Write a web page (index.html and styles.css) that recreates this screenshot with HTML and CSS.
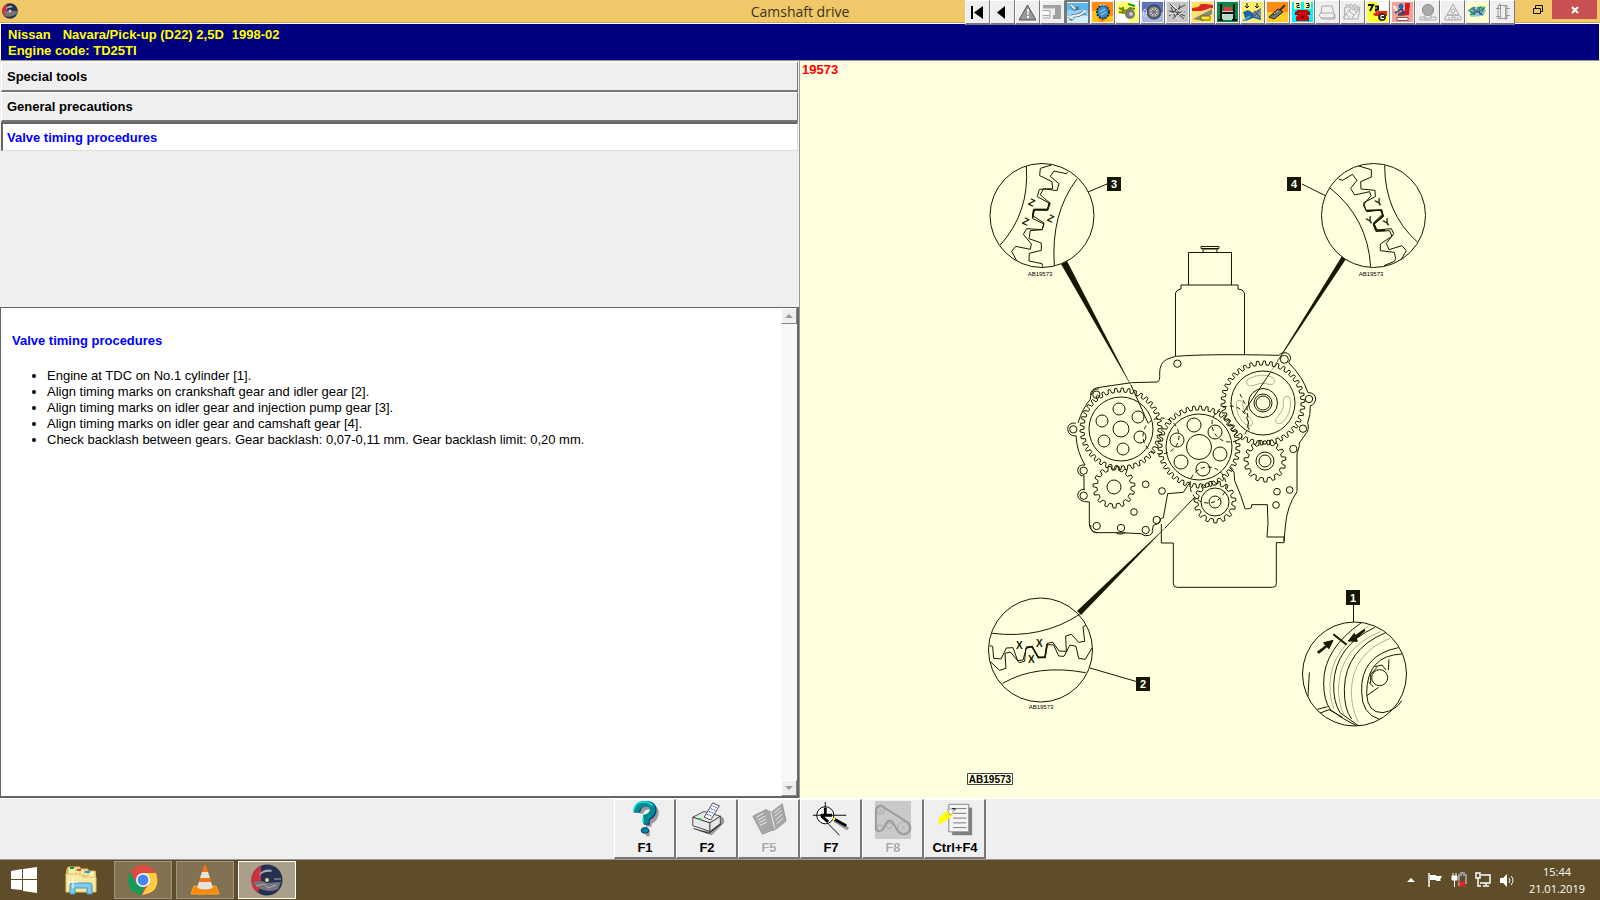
FILE: index.html
```html
<!DOCTYPE html>
<html lang="en">
<head>
    <meta charset="UTF-8">
    <meta name="viewport" content="width=device-width, initial-scale=1.0">
    <title>Camshaft drive</title>
    <link rel="stylesheet" href="styles.css">
</head>
<body>
    <header class="titlebar">
        <svg class="app-icon" viewBox="0 0 32 32">
            <circle cx="16" cy="16" r="15.500" fill="#26304f"/>
            <path d="M10 2A15.500 15.500 0 0 0 7 29L11 18Z" fill="#d0303c"/>
            <path d="M2 18Q10 14 30 16L29 22Q20 29 9 27Z" fill="#77737c"/>
            <path d="M9 9Q14 4 21 6L20 9Q13 8 8 12Z" fill="#b4bac4"/>
            <circle cx="16" cy="16" r="3" fill="#d8cfae"/>
        </svg>
        <h1>Camshaft drive</h1>
        <div class="title-right">
            <nav class="tools">
                <button aria-label="First"><svg viewBox="0 0 21 20"><path d="M4 4h2v13H4zM16 4v13L7 10.500z"/></svg></button>
                <button aria-label="Back"><svg viewBox="0 0 21 20"><path d="M13 4v13L5 10.500z"/></svg></button>
                <button aria-label="Warnings"><svg viewBox="0 0 21 20"><path d="M10.500 3L19 18H2z" fill="#999" stroke="#555"/><path d="M10 7h2l-.5 6h-1zM10 14h2v2h-2z" fill="#fff"/></svg></button>
                <button aria-label="Data"><svg viewBox="0 0 21 20"><path d="M1 3h18v14h-8V13h2V6H1z" fill="#a0a0a0"/><path d="M1 5h11v1H1M1 8.500h7v5H1M8 14v2H1" fill="none" stroke="#aaa"/><path d="M1 10h6v2H1z" fill="#fff"/></svg></button>
                <button class="active" aria-label="Procedures"><svg viewBox="0 0 21 20"><path fill="#5bb8ee" d="M0 0h21v7H0z"/><path fill="#8fd2f5" d="M0 7h21v6H0z"/><path fill="#d3effb" d="M0 13h21v7H0z"/><path d="M4 2l4 5M7 6l5-1M2 16l4-3 6-1 5-3M16 9l3 1M3 14l3 3" stroke="#5e7685" stroke-width="3.500" fill="none"/><path d="M4 2l4 4M2 15l4-2 6-1 5-3M16 8l3 1M3 13l3 3" stroke="#e3edf0" stroke-width="2" fill="none"/></svg></button>
                <button aria-label="Timing belt"><svg viewBox="0 0 21 20"><path fill="#ff8a0c" d="M0 0h21v20H0z"/><path fill="#ffc31d" d="M0 9h6l2 11H0zM14 14h7v6h-9z"/><ellipse cx="11" cy="10" rx="6" ry="6.500" fill="#3d8dc7" stroke="#15364d" stroke-width="2" stroke-dasharray="2 1"/><path d="M8 10l5-3M9 13l5-3M7 3h7" stroke="#a9e2f3"/></svg></button>
                <button aria-label="Auxiliary drive"><svg viewBox="0 0 21 20"><path fill="#ffff6b" d="M0 0h21v20H0z"/><path fill="#fff" d="M0 12h7l6 8H0zM13 0h8v6z"/><path d="M2 6l7 3 4-3 5 1M2 10l6 1M6 5v7" stroke="#728900" stroke-width="2" fill="none"/><circle cx="13" cy="12" r="5" fill="#777"/><circle cx="14" cy="12" r="2" fill="#ccc"/><path d="M11 2l7 2" stroke="#159b26" stroke-width="2"/></svg></button>
                <button aria-label="Tyres"><svg viewBox="0 0 21 20"><path fill="#5c74ba" d="M0 0h21v10H0z"/><path fill="#a9b8de" d="M0 10h21v10H0z"/><circle cx="12" cy="10" r="6.500" fill="#888" stroke="#444a5e" stroke-width="2"/><circle cx="12" cy="10" r="4" fill="#c7c7cc"/><path d="M12 6v8M8 10h8M9 7l6 6M15 7l-6 6" stroke="#666"/><ellipse cx="3" cy="11" rx="1.500" ry="4" fill="none" stroke="#d4d4da"/></svg></button>
                <button aria-label="Engine management"><svg viewBox="0 0 21 20"><path fill="#c5c5c5" d="M0 0h21v20H0z"/><path d="M3 2l6 6 9-5M2 9l7 1 8 7M6 17l5-6 7-2M13 3l-3 10M2 14l8-7M4 5l4 10M13 12l5 2" stroke="#444" fill="none"/><path d="M5 2l7 7M12 13l6-5M3 12l5-1M9 15l4 3" stroke="#eee"/></svg></button>
                <button aria-label="Air conditioning"><svg viewBox="0 0 21 20"><path fill="#ffe45a" d="M0 0h21v20H0z"/><path d="M0 6l6-1 3-3h5l7 1v3L9 9H0z" fill="#dd2724"/><path d="M1 17L20 7v5l-9 7z" fill="#8a8a72"/><path d="M1 15L19 6" stroke="#ddd"/><path fill="#ffe632" stroke="#776e19" d="M9 14h9v4H9z"/></svg></button>
                <button aria-label="Jacking points"><svg viewBox="0 0 21 20"><path fill="#0b854a" d="M0 0h21v20H0z"/><path fill="#b8dcc8" d="M5 9h11v9H5z"/><path d="M4 2v16M17 2v16M3 11h15" stroke="#111" stroke-width="2"/><path d="M7 5h7l1 4H6z" fill="#df4038"/><path d="M1 18h5M15 18h5" stroke="#111" stroke-width="2"/></svg></button>
                <button aria-label="Wheel alignment"><svg viewBox="0 0 21 20"><path fill="#fff06b" d="M0 0h21v20H0z"/><path d="M5 1v5M15 1v5M3 4l2 2 2-2M13 4l2 2 2-2" stroke="#111" fill="none"/><path d="M1 10l5-2 5 3 8-5v12l-8-2-7 3z" fill="#2363a5"/><path d="M11 10l8-3v9l-6-1z" fill="#8190a1"/><path d="M12 9l6 6M17 8l-4 6" stroke="#444"/><path d="M1 19l7-5" stroke="#49a5dc" stroke-width="2"/></svg></button>
                <button aria-label="Key programming"><svg viewBox="0 0 21 20"><path fill="#ff8c13" d="M0 0h21v10H0z"/><path fill="#ffcf24" d="M0 10h21v10H0z"/><path d="M2 15l9-8 5 3-9 7z" fill="#777" stroke="#222"/><path d="M13 8l5-5M6 13l4-3" stroke="#333" stroke-width="2"/><path d="M7 12l4-3" stroke="#ddd"/></svg></button>
                <button aria-label="Fault codes"><svg viewBox="0 0 21 20"><path fill="#00f3ff" d="M0 0h21v20H0z"/><path fill="#ffff9d" d="M2 0h7v7H2zM12 0h7v7h-7z"/><path d="M4 1.500h3v2H5v2h3M14 1.500h3v4h-3M15 3.500h2" stroke="#111" fill="none"/><path d="M4 19v-4l4-4h5l4 4v4z" fill="#db0000"/><path d="M3 13v-3l3-2h9l3 2v3h-4v-2H7v2z" fill="#b80000"/><circle cx="10.500" cy="15" r="1.500" fill="#400"/></svg></button>
                <button aria-label="Seats" disabled><svg viewBox="0 0 21 20" fill="none" stroke="#aaa"><path d="M5 4h10l2 8v4H4l-2-3 2-2zM4 11h12M4 16l2 1h12v-5"/></svg></button>
                <button aria-label="Service data" disabled><svg viewBox="0 0 21 20" fill="none" stroke="#aaa"><path d="M3 5h15l-2 12H2zM1 16L8 7h9l-7 9M4 12l4 4M7 9l5 4M11 7l4 3M4 4l1-2 2 2 2-2 2 2 2-2 2 2"/></svg></button>
                <button aria-label="Diagnosis"><svg viewBox="0 0 21 20"><path fill="#ffff38" d="M0 0h21v20H0z"/><path fill="#fff" d="M11 0h10v9L8 8z"/><path d="M1 3h5l-3 6M8 4.500h3v3H9v2" stroke="#111" fill="none" stroke-width="2"/><path d="M6 12l5-3h9v5H8z" fill="#ee2725"/><circle cx="15" cy="15" r="4" fill="#333"/><path d="M17 13.500h-3v3h3" fill="none" stroke="#fff"/></svg></button>
                <button aria-label="Airbags"><svg viewBox="0 0 21 20"><path fill="#f2a199" d="M0 0h21v20H0z"/><path d="M13 1h5l-1 12-8 1-3-3 7-2z" fill="#cf1c20"/><circle cx="9" cy="4" r="2.500" fill="#2c65a8"/><path d="M9 6l3 5-6 2M3 11l6-4" stroke="#234e7d" stroke-width="2" fill="none"/><path d="M2 4l3 5" stroke="#fff" stroke-width="2"/><path d="M5 15.500h11v3H5z" fill="#fff" stroke="#8b5551"/></svg></button>
                <button aria-label="A/C refrigerant" disabled><svg viewBox="0 0 21 20"><circle cx="11" cy="8" r="5.500" fill="#aaa" stroke="#888"/><path d="M3 15h5v-2h6v2h5v3H3zM6 16h9M8 16l2 2" fill="none" stroke="#aaa"/></svg></button>
                <button aria-label="ABS" disabled><svg viewBox="0 0 21 20" fill="none" stroke="#aaa"><path d="M11 2l6 11H5zM3 15l3-2h10l3 2v3H3zM7 15v3M10 18v-3h3v3M15 15l1 3"/><circle cx="11" cy="9" r="2"/></svg></button>
                <button aria-label="Wiring diagrams"><svg viewBox="0 0 21 20"><path fill="#ffffce" d="M0 0h21v20H0z"/><path d="M2 8l4-3 11-1 2 5-3 5-12 1z" fill="#8fcbd6"/><path d="M1 9l6-4v8l5-8 1 8 5-8M3 13l14-6M4 6l12 7" stroke="#29616f" fill="none"/><path d="M3 9l3 2M13 5l3 2" stroke="#299b37" stroke-width="2"/></svg></button>
                <button aria-label="Component location" disabled><svg viewBox="0 0 21 20" fill="none" stroke="#999"><path d="M6 3.500h9v13H6zM8.500 3v14M13.500 3v14M4 6.500h4M4 14.500h4M14 6.500h4M14 13.500h4M8 1v3M14 15v3"/></svg></button>
            </nav>
            <button class="win-btn" aria-label="Restore"><svg viewBox="0 0 12 12"><path d="M1.500 4.500h7v5h-7zM3.500 4V1.500h7v6H9" fill="none" stroke="#111"/></svg></button>
            <button class="win-btn close" aria-label="Close"><svg viewBox="0 0 12 12"><path d="M3 3l6 6M9 3l-6 6" stroke="#fff" stroke-width="2"/></svg></button>
        </div>
    </header>

    <section class="vehicle">
        <p><span class="make">Nissan</span><span class="model">Navara/Pick-up (D22) 2,5D</span><span>1998-02</span></p>
        <p>Engine code: TD25TI</p>
    </section>

    <main>
        <section class="left">
            <nav class="tabs">
                <button>Special tools</button>
                <button>General precautions</button>
                <button class="selected">Valve timing procedures</button>
            </nav>
            <div class="document">
                <article>
                    <h2>Valve timing procedures</h2>
                    <ul>
                        <li>Engine at TDC on No.1 cylinder [1].</li>
                        <li>Align timing marks on crankshaft gear and idler gear [2].</li>
                        <li>Align timing marks on idler gear and injection pump gear [3].</li>
                        <li>Align timing marks on idler gear and camshaft gear [4].</li>
                        <li>Check backlash between gears. Gear backlash: 0,07-0,11 mm. Gear backlash limit: 0,20 mm.</li>
                    </ul>
                </article>
                <div class="scrollbar">
                    <button aria-label="Scroll up"><svg viewBox="0 0 8 4"><path d="M4 0l4 4H0z"/></svg></button>
                    <button aria-label="Scroll down"><svg viewBox="0 0 8 4"><path d="M0 0h8L4 4z"/></svg></button>
                </div>
            </div>
        </section>

        <section class="figure">
            <p class="figure-id">19573</p>
            <svg class="diagram" viewBox="800 61 800 737">
                <!-- engine block and housing -->
                <g transform="translate(1060 340) scale(.33333)" class="ink block">
                    <path d="M347 49L320 58Q299 70 299 99Q301 125 291 126L215 128L112 143Q91 148 92 166L91 178Q68 204 54 249M48 288Q51 336 75 375M72 408V448M88 486V555Q92 574 109 578L180 578L243 581Q254 591 268 586Q281 580 277 571L280 556Q304 550 301 536L310 533L323 461L370 457L387 431M304 552V609H340V731Q340 742 352 742H638Q649 742 649 731V608H672V591H621L624 550L622 494H575V501Q573 508 555 506L542 466L524 422L522 396L508 382"/>
                    <path d="M347 49Q450 41 657 46Q661 38 675 38Q691 40 692 56L686 68Q728 110 744 158Q767 158 767 178Q763 196 751 197Q752 224 743 249Q750 268 735 285L718 309V317L711 342V455Q680 500 676 560L672 604"/>
                    <path d="M94 165Q98 145 117 147M47 249Q23 248 23 268Q25 288 49 288M75 375Q53 373 53 392Q56 408 73 408M75 448Q53 448 53 467Q56 486 88 486M92 555Q91 579 112 578M168 577Q171 584 186 582L197 577"/>
                    <circle cx="352" cy="71" r="11"/><circle cx="673" cy="58" r="12"/><circle cx="747" cy="177" r="11"/><circle cx="729" cy="266" r="11"/><circle cx="700" cy="327" r="11"/>
                    <circle cx="109" cy="164" r="11"/><circle cx="40" cy="268" r="11"/><circle cx="71" cy="392" r="11"/><circle cx="71" cy="467" r="11"/><circle cx="110" cy="558" r="11"/><circle cx="183" cy="564" r="11"/><circle cx="257" cy="570" r="11"/><circle cx="290" cy="540" r="11"/><circle cx="222" cy="516" r="10"/><circle cx="257" cy="433" r="10"/><circle cx="306" cy="453" r="10"/><circle cx="651" cy="455" r="10"/><circle cx="689" cy="450" r="10"/><circle cx="648" cy="495" r="10"/>
                </g>
                <g class="ink">
                    <path d="M1175.500 356V293Q1177 289 1181 289V285H1238V289Q1243 289 1244.500 293V355M1188.500 285V252.500H1231.500V285M1203 252V249H1217V252M1201 246.500h18v2h-18z"/>
                </g>

                <!-- gears, outlines are filled in by gears.js -->
                <g class="ink gears">
                    <path class="gear" data-cx="1121" data-cy="429" data-r="41" data-teeth="38"/>
                    <path class="gear" data-cx="1199" data-cy="447" data-r="41" data-teeth="38"/>
                    <path class="gear" data-cx="1263" data-cy="403" data-r="42" data-teeth="38"/>
                    <path class="gear" data-cx="1114" data-cy="487" data-r="21" data-teeth="15"/>
                    <path class="gear" data-cx="1215" data-cy="502" data-r="21" data-teeth="15"/>
                    <path class="gear" data-cx="1265" data-cy="461" data-r="21" data-teeth="15"/>
                    <circle cx="1121" cy="429" r="32"/><circle cx="1121" cy="429" r="8"/>
                    <circle cx="1119" cy="409" r="6"/><circle cx="1138" cy="417" r="6"/><circle cx="1140" cy="437" r="6"/><circle cx="1123" cy="449" r="6"/><circle cx="1104" cy="441" r="6"/><circle cx="1102" cy="421" r="6"/>
                    <circle cx="1199" cy="447" r="33"/><circle cx="1199" cy="447" r="12.500"/>
                    <circle cx="1194" cy="425" r="7"/><circle cx="1215" cy="432" r="7"/><circle cx="1220" cy="454" r="7"/><circle cx="1203" cy="469" r="7"/><circle cx="1181" cy="462" r="7"/><circle cx="1177" cy="440" r="7"/>
                    <circle cx="1263" cy="403" r="32"/><circle cx="1263" cy="403" r="14.500"/><circle cx="1263" cy="403" r="9"/><circle cx="1263" cy="403" r="7"/>
                    <circle cx="1114" cy="487" r="7"/><circle cx="1215" cy="502" r="14"/><circle cx="1215" cy="502" r="6"/><circle cx="1265" cy="461" r="9"/><circle cx="1265" cy="461" r="6"/>
                </g>
                <g transform="translate(1060 340) scale(.33333)" class="slots">
                    <path d="M566 116Q607 96 639 113Q649 120 641 130Q635 138 620 131Q601 127 578 137Q563 140 560 128Q558 120 566 116ZM676 170Q690 166 691 182Q696 214 670 246Q656 256 648 247Q642 239 654 229Q674 207 670 185Q668 174 676 170ZM533 182Q547 179 548 191Q548 214 574 239Q583 248 574 257Q565 261 555 252Q529 229 529 194Q528 185 533 182Z"/>
                </g>
                <g class="ink dashed">
                    <circle cx="1161" cy="436" r="18"/><circle cx="1230" cy="424" r="18"/><circle cx="1208" cy="485" r="18"/>
                    <path d="M1240 394l7 14 2 22"/>
                </g>

                <!-- pointers -->
                <g class="solid">
                    <path d="M1061 264l6-3 67 130z"/>
                    <path d="M1342 256l4 3-78 117z"/>
                    <path d="M1077 611l4 4 88-91z"/>
                </g>
                <path class="ink" d="M1131 385l17 38M1270 373l-27 40M1165 528l30-31"/>
                <path class="ink" d="M1088 192l19-8M1302 184l24 12M1090 668l48 14M1353.500 605v17"/>

                <!-- detail 3: idler and injection pump gears -->
                <circle class="lens" cx="1042" cy="215.500" r="52"/>
                <g transform="translate(970 150) scale(.33333)" class="ink detail">
                    <path d="M169 49Q179 188 90 286M321 87Q242 190 253 347"/>
                    <path d="M245 45L211 55L209 77L246 95L248 116L208 118L202 140L238 160L232 181L190 180L187 205L222 222L216 239L170 236L160 253L184 282L181 298L137 289L125 304L140 332"/>
                    <path d="M294 67L289 71L252 63L241 79L267 101L261 122L220 116L211 135L241 160L233 178L194 178L188 197L222 219L217 239L181 242L177 266L214 279V301L178 310L177 333L216 341L218 350"/>
                    <path class="bold-line" d="M238 158L233 179L192 179L188 203"/>
                </g>

                <!-- detail 4: idler and camshaft gears -->
                <circle class="lens" cx="1373.500" cy="215.500" r="52"/>
                <g transform="translate(1270 150) scale(.33333)" class="ink detail">
                    <path d="M344 46Q344 188 442 276M180 114Q293 204 302 350"/>
                    <path d="M266 48L304 59V81L272 95L273 117L315 121L316 140L281 158L288 181L335 181L340 200L310 224L318 244L359 242L366 259L331 282V302L373 307L377 326L373 334L342 347"/>
                    <path d="M206 87L218 91L247 73L261 91L242 115L254 135L299 125L303 137L280 165L290 185L330 180L338 192L311 218L321 240L364 236L371 251L349 280L357 299L396 287L409 302L393 330"/>
                    <path class="bold-line" d="M290 182L334 180L339 197L311 222L319 242L345 241"/>
                </g>

                <!-- detail 2: crankshaft and idler gears -->
                <circle class="lens" cx="1040.500" cy="650" r="52"/>
                <g transform="translate(970 570) scale(.33333)" class="ink detail">
                    <path d="M67 190Q215 208 329 133M98 340Q200 281 347 308"/>
                    <path d="M60 227L68 229L71 265L93 267L109 234L129 233L143 272L159 270L170 232L187 229L204 263L225 262L231 221L248 216L267 243L289 244L287 198L304 193L326 217L344 214L339 170L347 166"/>
                    <path d="M61 275L89 301L108 295L105 250L121 246L148 278L164 274L167 235L186 230L206 262L225 262L232 224L251 225L266 258L282 259L300 225L318 229L326 265L346 268L366 234"/>
                    <path class="bold-line" d="M168 233L186 230L205 262L225 262L231 224"/>
                </g>

                <!-- detail 1: crankshaft pulley -->
                <circle class="lens" cx="1354.500" cy="674" r="52"/>
                <g transform="translate(1280 580) scale(.33333)" class="ink detail">
                    <path d="M243 129Q130 208 131 309Q131 362 152 390Q188 417 229 437M285 142Q165 198 161 314Q160 365 180 398L235 437M317 158Q197 208 193 326Q192 388 215 417M355 203Q240 226 245 337Q245 401 298 418M366 222Q260 226 260 341Q262 399 309 398Q350 390 365 362M88 277L84 349M112 388L143 380M121 399L147 389L188 412M327 238L325 270M260 347L296 322M285 260L306 255L318 270M266 307L280 320"/>
                    <path class="fine" d="M268 137Q154 205 150 312Q149 359 162 386M302 155Q180 202 175 326Q177 375 191 402M330 175Q215 220 214 337Q215 390 236 428"/>
                    <circle cx="299" cy="293" r="24"/><path d="M291 262L272 283V310"/>
                    <path class="mark" d="M160 163L200 194"/>
                    <path class="arrow" d="M112 216L137 197L131 188L159 181L147 206L141 200L117 220ZM253 148L227 167L223 160L205 183L232 184L229 175L255 152Z"/>
                </g>

                <g class="marks">
                    <text x="-3" y="4" transform="translate(1032 202) rotate(25)">Z</text><text x="-3" y="4" transform="translate(1026 221) rotate(25)">Z</text><text x="-3" y="4" transform="translate(1051 218) rotate(25)">Z</text>
                    <text x="-3" y="4" transform="translate(1378 202) rotate(-30)">Y</text><text x="-3" y="4" transform="translate(1369 220) rotate(-30)">Y</text><text x="-3" y="4" transform="translate(1386 222) rotate(-30)">Y</text>
                    <text x="1016" y="649">X</text><text x="1036" y="647">X</text><text x="1028" y="663">X</text>
                </g>
                <g class="captions">
                    <text x="1040" y="276">AB19573</text><text x="1371" y="276">AB19573</text><text x="1041" y="709">AB19573</text>
                </g>
                <g class="callouts">
                    <path d="M1107 177h14v14h-14zM1287 177h14v14h-14zM1136 677h14v14h-14zM1346 590h14v15h-14z"/>
                    <text x="1114" y="188">3</text><text x="1294" y="188">4</text><text x="1143" y="688">2</text><text x="1353" y="602">1</text>
                </g>
                <g class="plate">
                    <path d="M967.500 773.500h45v11h-45z"/>
                    <text x="990" y="783">AB19573</text>
                </g>
            </svg>
        </section>
    </main>

    <footer class="keys">
        <button><svg viewBox="0 0 40 40"><path d="M15 13q2-8 10-7 8 1 6 9-1 5-7 7v5M21 34h4" stroke="#999" stroke-width="6" fill="none"/><path d="M12 12q0-9 9-9 9 0 8 8-1 5-7 7v7" stroke="#0b2c83" stroke-width="6" fill="none"/><path d="M11 12q0-9 9-9 9 0 8 7-1 5-7 7v7" stroke="#008b91" stroke-width="6" fill="none"/><path d="M8 11q1-10 11-10 6 0 9 4M18 17v6" stroke="#00e5ee" stroke-width="1.500" fill="none"/><ellipse cx="20" cy="31" rx="4" ry="3" fill="#008b91" stroke="#0b2c83"/></svg><span>F1</span></button>
        <button><svg viewBox="0 0 40 40"><path d="M10 31l15 5 13-13v-4l-4-4v7L23 31z" fill="#999"/><path d="M5 17l12-6 17 5v8l-11 8-18-6z" fill="#e8e8e8" stroke="#444"/><path d="M5 17l18 6 11-7M23 23v9M6 29l16 5 13-10" fill="none" stroke="#222"/><path d="M17 17l9-15 7 3-9 15z" fill="#fff" stroke="#444"/><path d="M20 14l5 2M22 11l5 2M24 8l5 2M26 5l4 2" stroke="#1b3ae0" stroke-dasharray="2 1"/><path d="M11 19h3" stroke="#00e000" stroke-width="2"/></svg><span>F2</span></button>
        <button disabled><svg viewBox="0 0 40 40"><path d="M3 16l14-7 5 3 12-9 4 18-11 9-4 1-10 4z" fill="#a6a6a6" stroke="#999"/><path d="M7 17l7-4M8 20l8-4M9 23l8-4M10 26l8-4M25 13l7-6M26 16l7-6M27 20l7-6M28 24l7-6M22 12l4 17" stroke="#eee"/></svg><span>F5</span></button>
        <button><svg viewBox="0 0 40 40"><path d="M24 18l15 10-2 3L23 22" fill="#999"/><circle cx="14" cy="15" r="9" fill="#fff" stroke="#000"/><path d="M14 1v6M1 15h35M17 24l12 12" stroke="#000"/><path d="M9 15h12M14 7v8M10 16l7 6M23 19l13 7" stroke="#000" stroke-width="3"/><circle cx="23" cy="19" r="1.500" fill="#ff0"/></svg><span>F7</span></button>
        <button disabled><svg viewBox="0 0 40 40"><path fill="#c9c9c9" d="M1 0h38v40H1z"/><path d="M8 5l28 18q5 7-1 11-7 3-11-4l-4-7q-3-5-7 0l-3 6q-4 5-8 1V10Q3 4 8 5Z" fill="none" stroke="#999" stroke-width="2"/><g fill="none" stroke="#aaa"><circle cx="7" cy="10" r="4"/><circle cx="6" cy="28" r="3"/><circle cx="16" cy="26" r="3"/><circle cx="31" cy="28" r="6"/><circle cx="31" cy="28" r="1"/><circle cx="7" cy="10" r="1"/></g></svg><span>F8</span></button>
        <button><svg viewBox="0 0 40 40"><path fill="#808080" d="M17 7h21v29H17z"/><path fill="#f4f4f4" stroke="#808080" d="M13.500 3.500h21v29h-21z"/><path d="M20 8h12M18 13h14M18 18h14M18 23h14M18 28h14" stroke="#777"/><path d="M3 18l9-8 6 5-11 8-4 2z" fill="#ff0"/><path d="M12 9l6-1v4l-3 3z" fill="#fff" stroke="#999"/><path d="M17 8h3v2" fill="none" stroke="#000"/></svg><span>Ctrl+F4</span></button>
    </footer>

    <footer class="taskbar">
        <button class="start" aria-label="Start"><svg viewBox="0 0 26 26"><path fill="#fff" d="M0 4l11-2v10H0zM12 2l14-2v12H12zM0 13h11v10L0 22zM12 13h14v13l-14-2z"/></svg></button>
        <button class="task" aria-label="File Explorer"><svg viewBox="0 0 32 32"><path d="M2 4h10l2 3h17v20H1V7z" fill="#d9bb58"/><path d="M3 3h12v7H3zM11 5h12v7H11zM19 7h11v7H19z" fill="#f9efb5" stroke="#d8b959"/><path d="M5 3h4v2H5z" fill="#00a22c"/><path d="M12 5h4v2h-4z" fill="#e34a25"/><path d="M20 7h5v2h-5z" fill="#2797e2"/><path d="M1 10h15l2 3h13v15H1z" fill="#f7e8a2" stroke="#e1c66d"/><path d="M5 30V21q0-2 3-2h16q3 0 3 2v9h-5v-6H10v6z" fill="#83caed" stroke="#3f98be"/><path d="M8 13v11M3 18h10" stroke="#fff"/></svg></button>
        <button class="task running" aria-label="Chrome"><svg viewBox="0 0 32 32"><circle cx="16" cy="16" r="15" fill="#dc4c3f"/><path d="M3 8l7 12 7 3-2 8Q1 29 1 16 1 11 3 8z" fill="#179b5a"/><path d="M16 9h13q6 19-14 22l7-12z" fill="#ffcd41"/><circle cx="16" cy="16" r="7" fill="#fff"/><circle cx="16" cy="16" r="5.500" fill="#4688f4"/></svg></button>
        <button class="task running" aria-label="VLC"><svg viewBox="0 0 32 32"><path d="M5 22h22l3 8H2z" fill="#f88900" stroke="#ffa72a"/><path d="M15 1h2l7 23q-8 4-16 0z" fill="#f5720c"/><path d="M13 8h6l2 6H11zM10 18h12l2 6q-8 3-16 0z" fill="#e5e4df"/></svg></button>
        <button class="task running current" aria-label="Camshaft drive">
            <svg viewBox="0 0 32 32">
                <circle cx="16" cy="16" r="15.500" fill="#26304f"/>
                <path d="M10 2A15.500 15.500 0 0 0 7 29L10 18Z" fill="#c8323e"/>
                <path d="M2 19Q8 15 16 19L30 18L27 25Q20 29 9 25Z" fill="#77737c"/>
                <path d="M5 22l8-2 4 4 8-3M23 15h7" stroke="#b5b0b4" fill="none"/>
                <path d="M9 9Q14 4 21 6L20 8Q13 7 8 12Z" fill="#a4aab6"/>
                <circle cx="16" cy="16" r="2" fill="#d8cfae"/>
            </svg>
        </button>
        <div class="tray">
            <button aria-label="Show hidden icons"><svg viewBox="0 0 16 16"><path fill="#fff" d="M4 10l4-4 4 4z"/></svg></button>
            <button aria-label="Action Center"><svg viewBox="0 0 16 16"><path d="M2 1v14" stroke="#fff" stroke-width="1.500"/><path d="M3 3h6v1h6l-2 4 1 1H9V8H3z" fill="#fff"/></svg></button>
            <button aria-label="Battery"><svg viewBox="0 0 16 16"><path d="M1 4h5v4H1zM2 1v3M5 1v3M3.500 8v7" fill="#fff" stroke="#fff"/><path d="M8 14V3h2V1h3v2h2v9" fill="none" stroke="#999" stroke-width="2"/><path d="M8 9l6 6M14 9l-6 6" stroke="#e12929" stroke-width="2"/></svg></button>
            <button aria-label="Network"><svg viewBox="0 0 16 16"><path d="M6 3h9v8H5M8 14h6M11 11v3M1 1h4v5H1zM3 6v8h3" fill="none" stroke="#fff" stroke-width="1.500"/></svg></button>
            <button aria-label="Volume"><svg viewBox="0 0 16 16"><path d="M1 6h3l4-4v13l-4-4H1z" fill="#fff"/><path d="M10 6q2 2 0 5M12 4q4 4 0 9" fill="none" stroke="#fff"/></svg></button>
        </div>
        <div class="clock"><time>15:44</time><time>21.01.2019</time></div>
    </footer>

    <script src="gears.js"></script>
</body>
</html>
```

FILE: styles.css
```css
* {
    margin: 0;
    padding: 0;
    box-sizing: border-box;
}

body {
    min-height: 100vh;
    display: flex;
    flex-direction: column;
    background: #efefef;
    font-family: "Liberation Sans", Arial, sans-serif;
    font-size: 13px;
    color: #000;
}

button {
    font: inherit;
    color: inherit;
    border: none;
    background: none;
}

svg {
    display: block;
}

/* title bar */
.titlebar {
    height: 24px;
    display: grid;
    grid-template-columns: 1fr auto 1fr;
    background: #f0c869;
    border-bottom: 1px solid #fff;
    box-shadow: inset 0 -1px #c9a65a;
}

.titlebar h1 {
    font: 14px/23px "Open Sans", "Segoe UI", sans-serif;
    color: #3c321a;
}

.app-icon {
    width: 16px;
    height: 16px;
    margin: 3px 2px;
}

.title-right {
    display: flex;
    justify-content: flex-end;
    align-items: flex-start;
    padding-right: 3px;
}

.tools {
    display: flex;
    position: relative;
}

.tools button {
    width: 25px;
    height: 25px;
    padding: 1px;
    background: #efefef;
    border: 1px solid #fff;
    border-right-color: #777;
    border-bottom: 2px solid #777;
}

.tools .active {
    border: 2px solid #777;
    padding: 0;
}

.tools svg {
    width: 21px;
    height: 20px;
}

.win-btn {
    width: 37px;
    height: 19px;
    display: flex;
    justify-content: flex-end;
    align-items: center;
    padding-right: 8px;
}

.win-btn svg {
    width: 12px;
    height: 12px;
}

.close {
    width: 45px;
    justify-content: center;
    padding: 0;
    background: #c75050;
}

/* vehicle header */
.vehicle {
    height: 37px;
    padding: 3px 7px 0;
    background: #000080;
    color: #ff0;
    font-weight: bold;
    line-height: 16px;
    border: solid #fff;
    border-width: 0 1px;
    border-bottom: 1px solid #999;
}

.vehicle .make {
    margin-right: 12px;
}

.vehicle .model {
    margin-right: 8px;
}

main {
    flex: 1;
    display: grid;
    grid-template-columns: 1fr 1fr;
}

/* left side */
.left {
    display: flex;
    flex-direction: column;
    border-right: 1px solid #999;
}

.tabs {
    display: flex;
    flex-direction: column;
    height: 246px;
    padding: 1px 1px 0;
}

.tabs button {
    height: 30px;
    padding-left: 5px;
    text-align: left;
    font-weight: bold;
    border: 1px solid #fff;
    border-right-color: #777;
    border-bottom: 2px solid #777;
}

.tabs .selected {
    height: 29px;
    background: #fff;
    color: #00f;
    border: 1px solid #ddd;
    border-top: 2px solid #666;
    border-left: 2px solid #666;
    padding-left: 4px;
}

.document {
    flex: 1;
    display: flex;
    background: #fff;
    border: 1px solid #666;
    border-right-width: 2px;
    border-bottom-width: 2px;
}

.document article {
    flex: 1;
    padding: 25px 11px;
}

.document h2 {
    font-size: 13px;
    line-height: 16px;
    color: #00f;
    margin-bottom: 19px;
}

.document ul {
    padding-left: 35px;
}

.document li {
    font-size: 13px;
    line-height: 16px;
}

.scrollbar {
    display: flex;
    flex-direction: column;
    justify-content: space-between;
    background: #f7f7f7;
}

.scrollbar button {
    width: 16px;
    height: 16px;
    padding: 5px 3px;
    background: #efefef;
    border: 1px solid #fff;
    border-right-color: #888;
    border-bottom-color: #888;
}

.scrollbar svg {
    width: 8px;
    height: 4px;
    fill: #999;
}

/* figure */
.figure {
    position: relative;
    background: #ffffdf;
}

.figure-id {
    position: absolute;
    top: 1px;
    left: 2px;
    font-weight: bold;
    line-height: 16px;
    color: #f00;
}

.diagram {
    width: 100%;
    height: 100%;
}

.ink {
    fill: none;
    stroke: #171700;
    stroke-width: 1;
}

.block,
.detail {
    stroke-width: 3;
}

.bold-line {
    stroke-width: 5;
}

.slots {
    fill: none;
    stroke: #888878;
    stroke-width: 2;
}

.fine {
    stroke: #88887a;
    stroke-width: 2;
}

.mark {
    stroke-width: 6;
}

.solid,
.arrow {
    fill: #171700;
}

.dashed {
    stroke-dasharray: 4 3;
}

.lens {
    fill: #ffffdf;
    stroke: #171700;
}

.marks {
    font-size: 10px;
    font-weight: bold;
    fill: #171700;
}

.captions {
    font-size: 6px;
    text-anchor: middle;
}

.callouts {
    font-size: 11px;
    font-weight: bold;
    text-anchor: middle;
    fill: #171700;
}

.callouts text {
    fill: #fff;
}

.plate {
    font-size: 10px;
    font-weight: bold;
    text-anchor: middle;
}

.plate path {
    fill: none;
    stroke: #444;
}

/* function keys */
.keys {
    height: 62px;
    display: flex;
    justify-content: center;
    border-top: 1px solid #fff;
    border-bottom: 1px solid #999;
}

.keys button {
    width: 62px;
    display: flex;
    flex-direction: column;
    align-items: center;
    padding: 1px 0 0 1px;
    border: 1px solid #fff;
    border-right: 2px solid #777;
    border-bottom: 2px solid #777;
}

.keys svg {
    width: 40px;
    height: 40px;
}

.keys span {
    font-weight: bold;
    line-height: 18px;
}

.keys button:disabled {
    color: #aaa;
    text-shadow: 1px 1px #fff;
}

/* taskbar */
.taskbar {
    height: 40px;
    display: flex;
    background: #5f4d29;
    gap: 4px;
}

.start {
    width: 48px;
    padding: 7px 11px;
}

.start svg {
    width: 26px;
    height: 26px;
}

.task {
    width: 58px;
    display: flex;
    justify-content: center;
    align-items: center;
}

.task svg {
    width: 32px;
    height: 32px;
}

.running {
    margin: 1px 0;
    background: #807252;
    border: 1px solid #a0957c;
}

.current {
    background: #a99f8b;
    border-color: #fff;
}

.tray {
    margin-left: auto;
    display: flex;
    align-items: center;
    gap: 8px;
}

.tray svg {
    width: 16px;
    height: 16px;
}

.clock {
    display: flex;
    flex-direction: column;
    justify-content: center;
    text-align: center;
    padding: 0 15px 0 10px;
    font: 11px/17px "Open Sans", "Segoe UI", sans-serif;
    color: #fff;
}
```

FILE: gears.js
```js
// builds the toothed outline of every .gear path
document.querySelectorAll('.gear').forEach(gear => {
    const cx = Number(gear.dataset.cx);
    const cy = Number(gear.dataset.cy);
    const tip = Number(gear.dataset.r);
    const root = tip - 4;
    const teeth = Number(gear.dataset.teeth);
    const step = Math.PI * 2 / teeth;
    const points = [];

    for (let i = 0; i < teeth; i++) {
        [[0, root], [0.4, root], [0.55, tip], [0.85, tip]].forEach(([part, r]) => {
            const a = (i + part) * step;
            points.push((cx + r * Math.cos(a)).toFixed(1) + ' ' + (cy + r * Math.sin(a)).toFixed(1));
        });
    }

    gear.setAttribute('d', 'M' + points.join('L') + 'Z');
});
```
